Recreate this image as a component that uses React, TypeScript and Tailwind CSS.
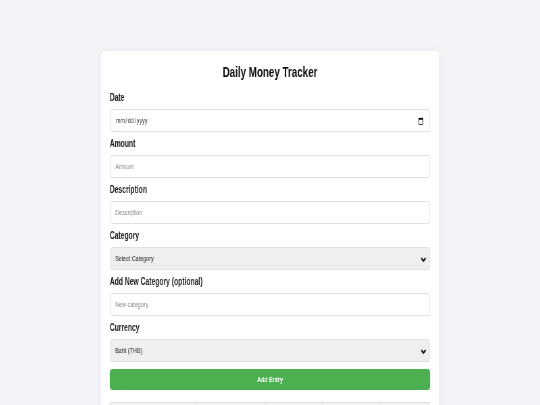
// The reference is a horizontally squeezed capture of a 500px card,
// so the card is laid out at full width and then scaled on x.
const FONT = "font-['Liberation_Sans',Arial,sans-serif]";

const COLUMNS = [
  { name: "Date", w: "w-[50px]" },
  { name: "Amount", w: "w-[76px]" },
  { name: "Description", w: "w-[104px]" },
  { name: "Category", w: "w-[84px]" },
  { name: "Currency", w: "w-[86px]" },
  { name: "Action", w: "" },
];

function Field({ label, children }: { label: string; children: React.ReactNode }) {
  return (
    <div className="flex flex-col">
      <label className="mt-[6px] mb-[6px] text-[10px] leading-[11px] font-bold text-[#222]">{label}</label>
      {children}
    </div>
  );
}

function Select({ children, defaultValue }: { children: React.ReactNode; defaultValue: string }) {
  return (
    <div className="relative h-[23px]">
      <select
        defaultValue={defaultValue}
        className="block h-[23px] w-full appearance-none rounded-[4px] border border-[#e0e0e0] bg-[#efefef] px-[7px] text-[8px] text-[#222] outline-none"
      >
        {children}
      </select>
      <svg
        viewBox="0 0 10 6"
        className="pointer-events-none absolute top-[9.5px] right-[6px] h-[5px] w-[8px]"
        fill="none"
        stroke="#111"
        strokeWidth="2.4"
      >
        <polyline points="1,1 5,5 9,1" />
      </svg>
    </div>
  );
}

const inputCls =
  "block h-[23px] w-full rounded-[4px] border border-[#e0e0e0] bg-white px-[7px] text-[8px] text-[#333] placeholder:text-[#8a8a8a] outline-none";

export default function App() {
  return (
    <div className={`min-h-[405px] overflow-hidden bg-[#f4f4f8] pt-[51px] antialiased ${FONT}`}>
      <div className="mx-auto w-[338px]">
        <div className="w-[500px] origin-top-left scale-x-[0.676] rounded-[5px] bg-white px-[13px] pt-[11px] pb-5 shadow-[0_0_8px_rgba(0,0,0,0.06)] will-change-transform">
          <h1 className="h-[20px] text-center text-[14.5px] leading-[20px] font-bold text-[#111]">Daily Money Tracker</h1>

          <form className="mt-[4px] flex flex-col" onSubmit={(e) => e.preventDefault()}>
            <Field label="Date">
              <input type="date" className={`${inputCls} text-[8.5px]`} />
            </Field>
            <Field label="Amount">
              <input type="number" placeholder="Amount" className={inputCls} />
            </Field>
            <Field label="Description">
              <input type="text" placeholder="Description" className={inputCls} />
            </Field>
            <Field label="Category">
              <Select defaultValue="">
                <option value="">Select Category</option>
                <option>Food</option>
                <option>Transport</option>
              </Select>
            </Field>
            <Field label="Add New Category (optional)">
              <input type="text" placeholder="New category" className={inputCls} />
            </Field>
            <Field label="Currency">
              <Select defaultValue="THB">
                <option value="THB">Baht (THB)</option>
                <option value="USD">Dollar (USD)</option>
              </Select>
            </Field>
            <button
              type="submit"
              className="mt-[7px] h-[21px] w-full rounded-[4px] bg-[#4caf50] text-[8px] font-bold text-white"
            >
              Add Entry
            </button>
          </form>

          <table className="mt-[12px] w-full border-collapse text-[9px]">
            <thead>
              <tr className="bg-[#f2f2f2]">
                {COLUMNS.map((c) => (
                  <th key={c.name} className={`border border-[#e0e0e0] px-2 py-[6px] text-left font-bold ${c.w}`}>
                    {c.name}
                  </th>
                ))}
              </tr>
            </thead>
            <tbody>
              <tr>
                <td colSpan={6} className="border border-[#e0e0e0] px-2 py-[6px] text-center text-[#777]">
                  No entries yet
                </td>
              </tr>
            </tbody>
          </table>
        </div>
      </div>
    </div>
  );
}
